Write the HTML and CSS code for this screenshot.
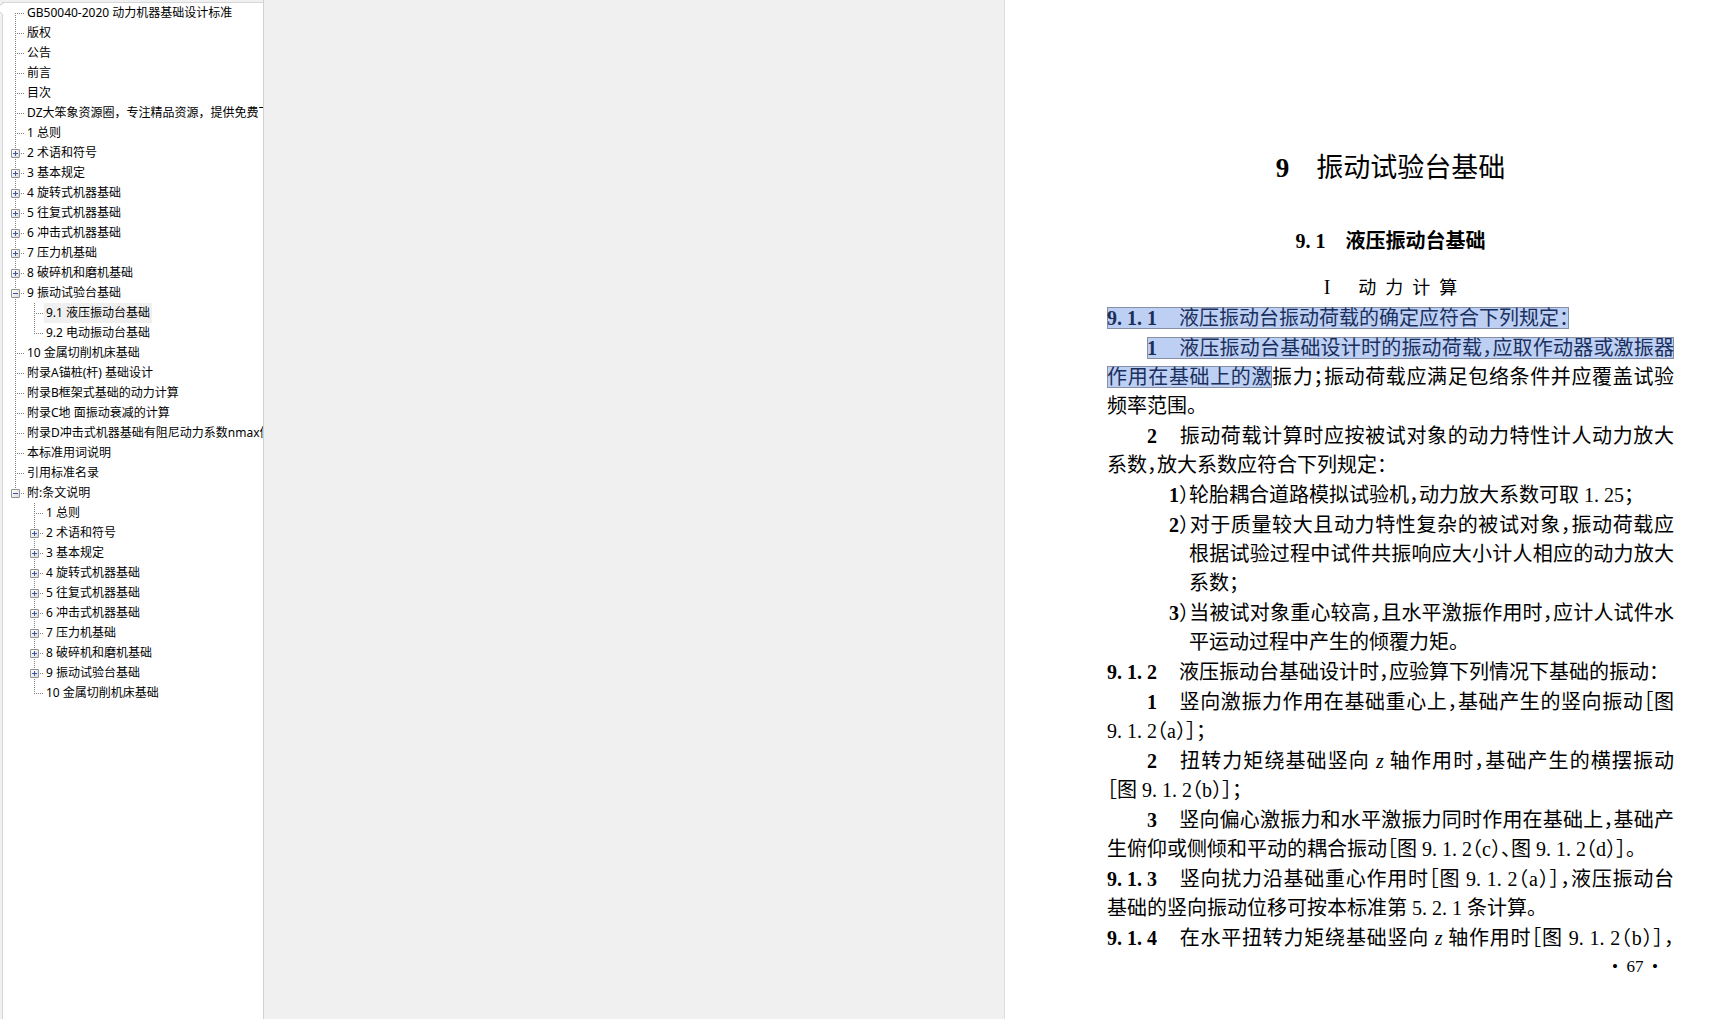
FILE: index.html
```html
<!DOCTYPE html>
<html lang="zh-CN">
<head>
<meta charset="utf-8">
<title>GB50040-2020 动力机器基础设计标准</title>
<link rel="stylesheet" href="styles.css">
</head>
<body>
<div class="reader">
  <nav class="sidebar" aria-label="目录">
    <svg class="notch" width="4" height="16" viewBox="0 0 4 16" aria-hidden="true">
      <path d="M4 2.500Q2.500 2.500 2 4L0 5.500V12L2.500 14.500V16H4Z" fill="#fff"/>
      <path d="M4 2.500Q2.500 2.500 2 4L0 5.500M0 12L2.500 14.500V16" fill="none" stroke="#d0d1d3"/>
    </svg>
    <ul class="tree">
      <li class="first"><div class="row"><a href="#">GB50040-2020 动力机器基础设计标准</a></div></li>
      <li><div class="row"><a href="#">版权</a></div></li>
      <li><div class="row"><a href="#">公告</a></div></li>
      <li><div class="row"><a href="#">前言</a></div></li>
      <li><div class="row"><a href="#">目次</a></div></li>
      <li><div class="row"><a href="#">DZ大笨象资源圈，专注精品资源，提供免费下载</a></div></li>
      <li><div class="row"><a href="#">1 总则</a></div></li>
      <li><div class="row"><button class="toggle plus" aria-label="展开"></button><a href="#">2 术语和符号</a></div></li>
      <li><div class="row"><button class="toggle plus" aria-label="展开"></button><a href="#">3 基本规定</a></div></li>
      <li><div class="row"><button class="toggle plus" aria-label="展开"></button><a href="#">4 旋转式机器基础</a></div></li>
      <li><div class="row"><button class="toggle plus" aria-label="展开"></button><a href="#">5 往复式机器基础</a></div></li>
      <li><div class="row"><button class="toggle plus" aria-label="展开"></button><a href="#">6 冲击式机器基础</a></div></li>
      <li><div class="row"><button class="toggle plus" aria-label="展开"></button><a href="#">7 压力机基础</a></div></li>
      <li><div class="row"><button class="toggle plus" aria-label="展开"></button><a href="#">8 破碎机和磨机基础</a></div></li>
      <li><div class="row"><button class="toggle" aria-label="折叠"></button><a href="#">9 振动试验台基础</a></div>
        <ul>
          <li><div class="row"><a href="#" class="selected">9.1 液压振动台基础</a></div></li>
          <li class="last"><div class="row"><a href="#">9.2 电动振动台基础</a></div></li>
        </ul>
      </li>
      <li><div class="row"><a href="#">10 金属切削机床基础</a></div></li>
      <li><div class="row"><a href="#">附录A锚桩(杆) 基础设计</a></div></li>
      <li><div class="row"><a href="#">附录B框架式基础的动力计算</a></div></li>
      <li><div class="row"><a href="#">附录C地 面振动衰减的计算</a></div></li>
      <li><div class="row"><a href="#">附录D冲击式机器基础有阻尼动力系数nmax值</a></div></li>
      <li><div class="row"><a href="#">本标准用词说明</a></div></li>
      <li><div class="row"><a href="#">引用标准名录</a></div></li>
      <li class="last"><div class="row"><button class="toggle" aria-label="折叠"></button><a href="#">附:条文说明</a></div>
        <ul>
          <li><div class="row"><a href="#">1 总则</a></div></li>
          <li><div class="row"><button class="toggle plus" aria-label="展开"></button><a href="#">2 术语和符号</a></div></li>
          <li><div class="row"><button class="toggle plus" aria-label="展开"></button><a href="#">3 基本规定</a></div></li>
          <li><div class="row"><button class="toggle plus" aria-label="展开"></button><a href="#">4 旋转式机器基础</a></div></li>
          <li><div class="row"><button class="toggle plus" aria-label="展开"></button><a href="#">5 往复式机器基础</a></div></li>
          <li><div class="row"><button class="toggle plus" aria-label="展开"></button><a href="#">6 冲击式机器基础</a></div></li>
          <li><div class="row"><button class="toggle plus" aria-label="展开"></button><a href="#">7 压力机基础</a></div></li>
          <li><div class="row"><button class="toggle plus" aria-label="展开"></button><a href="#">8 破碎机和磨机基础</a></div></li>
          <li><div class="row"><button class="toggle plus" aria-label="展开"></button><a href="#">9 振动试验台基础</a></div></li>
          <li class="last"><div class="row"><a href="#">10 金属切削机床基础</a></div></li>
        </ul>
      </li>
    </ul>
  </nav>
  <main class="viewer">
    <article class="page">
      <h1><b>9</b>　振动试验台基础</h1>
      <h2>9. 1　液压振动台基础</h2>
      <h3><span class="roman">I</span>动&ensp;力&ensp;计&ensp;算</h3>
      <section class="clauses">
        <p><span class="line"><mark><b class="num">9. 1. 1</b>液压振动台振动荷载的确定应符合下列规定：</mark></span></p>
        <p>
          <span class="line full item"><mark><b class="num">1</b>液压振动台基础设计时的振动荷载，应取作动器或激振器</mark></span>
          <span class="line full"><mark>作用在基础上的激</mark>振力；振动荷载应满足包络条件并应覆盖试验</span>
          <span class="line">频率范围。</span>
        </p>
        <p>
          <span class="line full item"><b class="num">2</b>振动荷载计算时应按被试对象的动力特性计人动力放大</span>
          <span class="line">系数，放大系数应符合下列规定：</span>
        </p>
        <p class="sub"><span class="line"><span class="num"><b>1</b>）</span>轮胎耦合道路模拟试验机，动力放大系数可取 1. 25；</span></p>
        <p class="sub">
          <span class="line full"><span class="num"><b>2</b>）</span>对于质量较大且动力特性复杂的被试对象，振动荷载应</span>
          <span class="line full">根据试验过程中试件共振响应大小计人相应的动力放大</span>
          <span class="line">系数；</span>
        </p>
        <p class="sub">
          <span class="line full"><span class="num"><b>3</b>）</span>当被试对象重心较高，且水平激振作用时，应计人试件水</span>
          <span class="line">平运动过程中产生的倾覆力矩。</span>
        </p>
        <p><span class="line"><b class="num">9. 1. 2</b>液压振动台基础设计时，应验算下列情况下基础的振动：</span></p>
        <p>
          <span class="line full item"><b class="num">1</b>竖向激振力作用在基础重心上，基础产生的竖向振动［图</span>
          <span class="line">9. 1. 2（a）］；</span>
        </p>
        <p>
          <span class="line full item"><b class="num">2</b>扭转力矩绕基础竖向 <i>z</i> 轴作用时，基础产生的横摆振动</span>
          <span class="line">［图 9. 1. 2（b）］；</span>
        </p>
        <p>
          <span class="line full item"><b class="num">3</b>竖向偏心激振力和水平激振力同时作用在基础上，基础产</span>
          <span class="line">生俯仰或侧倾和平动的耦合振动［图 9. 1. 2（c）、图 9. 1. 2（d）］。</span>
        </p>
        <p>
          <span class="line full"><b class="num">9. 1. 3</b>竖向扰力沿基础重心作用时［图 9. 1. 2（a）］，液压振动台</span>
          <span class="line">基础的竖向振动位移可按本标准第 5. 2. 1 条计算。</span>
        </p>
        <p><span class="line full"><b class="num">9. 1. 4</b>在水平扭转力矩绕基础竖向 <i>z</i> 轴作用时［图 9. 1. 2（b）］，</span></p>
      </section>
      <footer>•&ensp;67&ensp;•</footer>
    </article>
  </main>
</div>
</body>
</html>
```
FILE: styles.css
```css
* { box-sizing: border-box; }

body {
  margin: 0;
  background: #f0f0f0;
  color: #000;
}

.reader {
  display: flex;
  min-height: 100vh;
}

/* Bookmark tree */
.sidebar {
  position: relative;
  flex: 0 0 264px;
  overflow: hidden;
  padding-left: 2px;
  border-right: 1px solid #d0d1d3;
  background: #f1f1f1;
  font: 12px/20px "Noto Sans", "Noto Sans CJK SC", sans-serif;
}

.notch {
  position: absolute;
  top: 0;
  left: 0;
}

.tree {
  min-height: 100%;
  border-top: 1px solid #d5d6d8;
  border-left: 1px solid #d5d6d8;
  margin-top: 2px;
  background: #fff;
}

.sidebar ul {
  margin-bottom: 0;
  padding: 0;
  list-style: none;
}

.tree > li { margin-left: 12px; }
.tree ul { margin: 0 0 0 19px; }

.tree li {
  background: repeating-linear-gradient(#808080 0 1px, transparent 1px 2px) 0 0 / 1px 100% no-repeat;
}
.tree li.first { background-position: 0 10px; }
.tree li.last { background-size: 1px 10px; }

.row {
  position: relative;
  height: 20px;
  padding-left: 10px;
  white-space: nowrap;
  background: repeating-linear-gradient(90deg, #808080 0 1px, transparent 1px 2px) 0 10px / 9px 1px no-repeat;
}

.row a {
  display: inline-block;
  height: 20px;
  padding: 0 2px;
  color: inherit;
  text-decoration: none;
}
.row a.selected { background: #f0f0f0; }

.toggle {
  position: absolute;
  top: 6px;
  left: -4px;
  width: 9px;
  height: 9px;
  padding: 0;
  border: 1px solid #919191;
  border-radius: 1px;
  background:
    linear-gradient(#3b56a0, #3b56a0) center / 5px 1px no-repeat,
    linear-gradient(135deg, #fff, #dcdcdc);
}
.toggle.plus {
  background:
    linear-gradient(#3b56a0, #3b56a0) center / 5px 1px no-repeat,
    linear-gradient(#3b56a0, #3b56a0) center / 1px 5px no-repeat,
    linear-gradient(135deg, #fff, #dcdcdc);
}

/* Document page */
.viewer {
  flex: 1;
  display: flex;
  justify-content: flex-end;
}

.page {
  width: 716px;
  padding: 148px 46px 0 102px;
  border-left: 1px solid #dcdcdc;
  background: #fff;
  font: 20px/29px "Liberation Serif", "Noto Sans CJK SC", serif;
  font-feature-settings: "halt";
}

h1, h2, h3, p { margin: 0; }

h1 {
  font-size: 27px;
  line-height: 40px;
  font-weight: 400;
  text-align: center;
}

h2 {
  margin-top: 38px;
  font-size: 20px;
  line-height: 30px;
  text-align: center;
}

h3 {
  margin: 16px 0 1px;
  font-size: 18px;
  line-height: 30px;
  font-weight: 400;
  text-align: center;
}
.roman {
  margin-right: 28px;
  font-size: 20px;
}

.clauses {
  display: flex;
  flex-direction: column;
  gap: 1px;
}

.line {
  display: block;
  white-space: nowrap;
}
.full { text-align-last: justify; }
.item { padding-left: 40px; }

.num {
  display: inline-block;
  width: 72px;
  text-align-last: left;
}
.item .num { width: 32px; }

.sub { padding-left: 82px; }
.sub .num {
  width: 20px;
  margin-left: -20px;
}

mark {
  background: #bdd0f4;
  color: #1b2f5c;
  box-shadow: inset 0 0 0 1px #858fa5;
}

footer {
  padding-right: 16px;
  font-size: 17px;
  line-height: 27px;
  text-align: right;
}
```
